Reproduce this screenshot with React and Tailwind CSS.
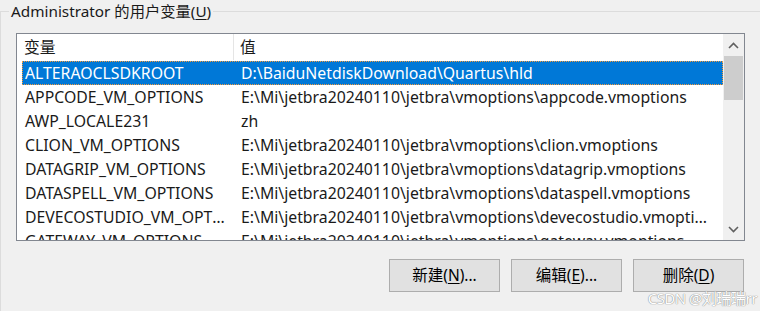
import React from "react";

const rows = [
  ["ALTERAOCLSDKROOT", "D:\\BaiduNetdiskDownload\\Quartus\\hld"],
  ["APPCODE_VM_OPTIONS", "E:\\Mi\\jetbra20240110\\jetbra\\vmoptions\\appcode.vmoptions"],
  ["AWP_LOCALE231", "zh"],
  ["CLION_VM_OPTIONS", "E:\\Mi\\jetbra20240110\\jetbra\\vmoptions\\clion.vmoptions"],
  ["DATAGRIP_VM_OPTIONS", "E:\\Mi\\jetbra20240110\\jetbra\\vmoptions\\datagrip.vmoptions"],
  ["DATASPELL_VM_OPTIONS", "E:\\Mi\\jetbra20240110\\jetbra\\vmoptions\\dataspell.vmoptions"],
  ["DEVECOSTUDIO_VM_OPTIONS", "E:\\Mi\\jetbra20240110\\jetbra\\vmoptions\\devecostudio.vmoptions"],
  ["GATEWAY_VM_OPTIONS", "E:\\Mi\\jetbra20240110\\jetbra\\vmoptions\\gateway.vmoptions"],
];

function Btn({ pre, key2 }) {
  return (
    <button className="w-[111px] h-[33px] bg-[#e1e1e1] border border-[#adadad] text-[15.5px] text-black flex items-center justify-center leading-none">
      <span>
        {pre}(<span className="underline underline-offset-2">{key2}</span>)
        {pre === "删除" ? "" : "..."}
      </span>
    </button>
  );
}

export default function App() {
  return (
    <div
      className="w-[760px] h-[311px] bg-[#f0f0f0] overflow-hidden relative text-black"
      style={{ fontFamily: '"Noto Sans", "Noto Sans CJK SC", sans-serif' }}
    >
      <fieldset className="border-t border-l border-[#dcdcdc] w-[800px] h-[320px] pl-[15px] m-0">
        <legend className="ml-[-7px] px-[2px] text-[15.3px] leading-[22px] text-[#1a1a1a]">
          Administrator 的用户变量(<span className="underline underline-offset-2">U</span>)
        </legend>
        <div className="mt-[11px] w-[729px] h-[208px] border border-[#828790] bg-white flex">
          <div className="flex-1 flex flex-col overflow-hidden text-[15.8px]">
            <div className="h-[27px] flex shrink-0 text-[#1a1a1a]">
              <div className="w-[217px] pl-[7px] pt-[2px] flex items-center border-r border-[#e5e5e5] h-[26px]">变量</div>
              <div className="pl-[6px] pt-[2px] flex items-center h-[26px]">值</div>
            </div>
            {rows.map(([k, v], i) => (
              <div
                key={k}
                className={
                  "ml-[5px] h-[24px] shrink-0 flex items-center pt-[1px] " +
                  (i === 0
                    ? "bg-[#0078d7] text-white border border-dotted border-[#f39a3c]"
                    : "border border-transparent text-[#1a1a1a]")
                }
              >
                <div className="w-[211px] pl-[2px] pr-[4px] truncate">{k}</div>
                <div className="w-[482px] pl-[7px] truncate">{v}</div>
              </div>
            ))}
          </div>
          <div className="w-[21px] bg-[#f0f0f0] flex flex-col items-center shrink-0">
            <div className="h-[22px] w-full flex items-center justify-center">
              <svg width="11" height="7" viewBox="0 0 11 7">
                <path d="M1 6 L5.5 1.5 L10 6" fill="none" stroke="#606060" strokeWidth="1.6" />
              </svg>
            </div>
            <div className="w-[19px] h-[44px] bg-[#cdcdcd]" />
            <div className="flex-1" />
            <div className="h-[22px] w-full flex items-center justify-center">
              <svg width="11" height="7" viewBox="0 0 11 7">
                <path d="M1 1 L5.5 5.5 L10 1" fill="none" stroke="#606060" strokeWidth="1.6" />
              </svg>
            </div>
          </div>
        </div>
        <div className="w-[728px] mt-[18px] flex justify-end gap-[11px]">
          <Btn pre="新建" key2="N" />
          <Btn pre="编辑" key2="E" />
          <Btn pre="删除" key2="D" />
        </div>
      </fieldset>
      <div className="absolute right-[3px] bottom-[2px] text-[15px] text-white [text-shadow:0_0_1px_#8a8a8a,0_0_1px_#8a8a8a] tracking-[-0.5px]">
        CSDN @刘瑞瑞rr
      </div>
    </div>
  );
}
